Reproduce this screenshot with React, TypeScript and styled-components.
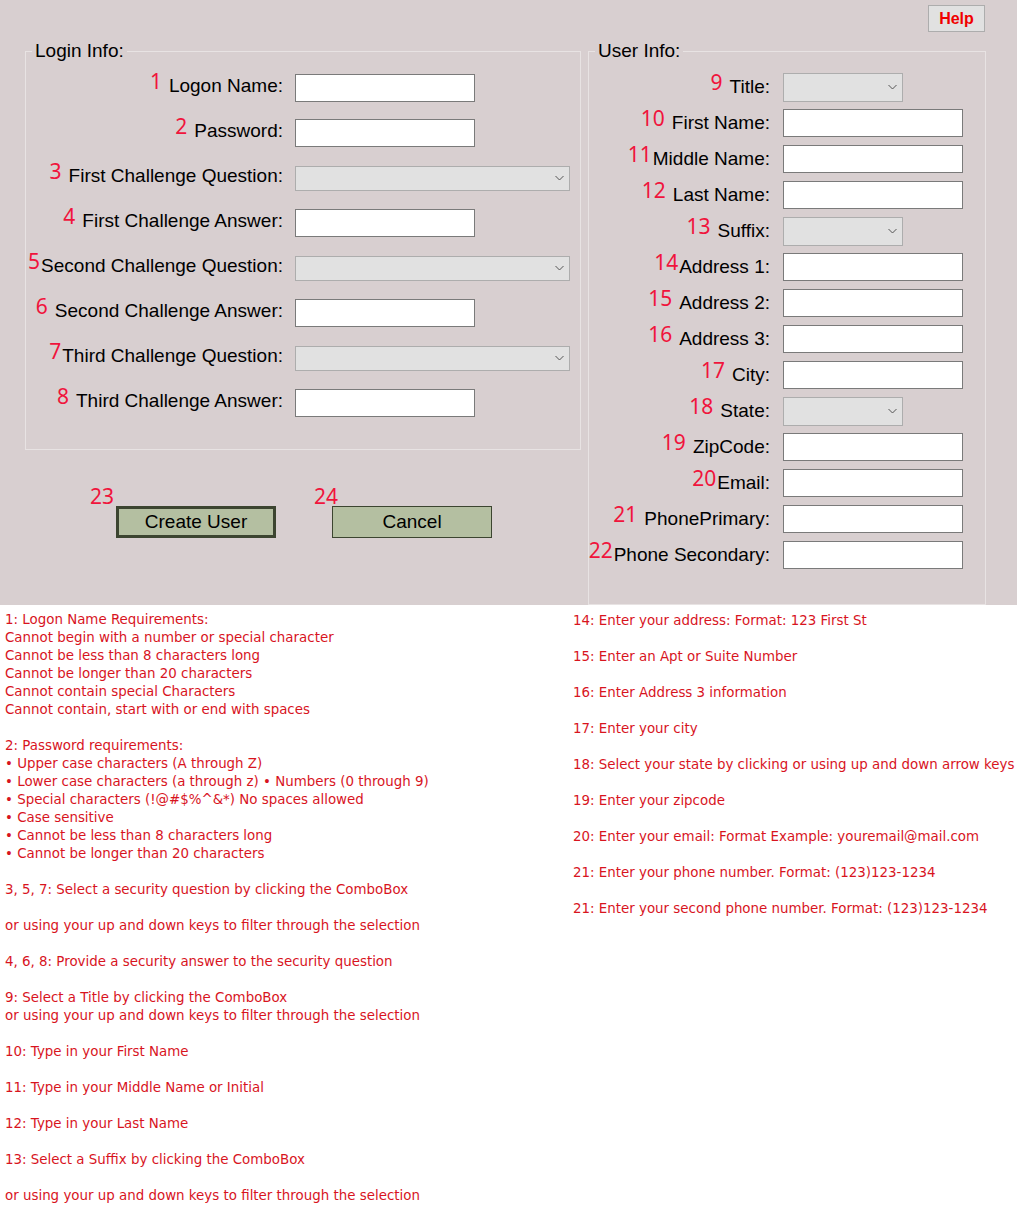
import React from 'react'
import styled, { createGlobalStyle } from 'styled-components'

const GlobalStyle = createGlobalStyle`
  body {
    margin: 0;
    background: #ffffff;
  }
  * {
    box-sizing: border-box;
  }
`

const Page = styled.div`
  width: 1017px;
  font-family: 'Liberation Sans', Arial, sans-serif;
`

const FormPanel = styled.div`
  height: 605px;
  background: #d8cfd0;
  display: flex;
  flex-direction: column;
`

const HelpRow = styled.div`
  height: 40px;
  display: flex;
  justify-content: flex-end;
  padding: 5px 32px 0 0;
`

const HelpButton = styled.button`
  width: 57px;
  height: 27px;
  background: #e1e1e1;
  border: 1px solid #adadad;
  color: #f00000;
  font-family: 'Liberation Sans', Arial, sans-serif;
  font-weight: bold;
  font-size: 16px;
  padding: 0;
`

const Columns = styled.div`
  display: flex;
  gap: 7px;
  padding-left: 25px;
`

const LeftColumn = styled.div`
  display: flex;
  flex-direction: column;
  width: 556px;
`

const GroupBox = styled.fieldset<{ $width: number; $height: number; $padTop: number }>`
  margin: 0;
  width: ${p => p.$width}px;
  height: ${p => p.$height}px;
  border: 1px solid #e8e3e3;
  padding: ${p => p.$padTop}px 0 0 0;
  min-width: 0;
`

const Legend = styled.legend`
  font-size: 19px;
  line-height: 22px;
  color: #000;
  padding: 0 3px;
  margin-left: 6px;
`

const FieldGrid = styled.div<{ $labelWidth: number; $gap: number; $rowGap: number }>`
  display: grid;
  grid-template-columns: ${p => p.$labelWidth}px 1fr;
  grid-auto-rows: 28px;
  column-gap: ${p => p.$gap}px;
  row-gap: ${p => p.$rowGap}px;
  align-items: center;
`

const Label = styled.div<{ $lift: number }>`
  display: flex;
  justify-content: flex-end;
  align-items: baseline;
  white-space: nowrap;
  font-size: 19px;
  color: #000;
  padding-bottom: ${p => p.$lift}px;
`

const Num = styled.span<{ $tight?: boolean }>`
  font-family: 'Noto Sans', 'DejaVu Sans', sans-serif;
  font-size: 21px;
  color: #f0143c;
  position: relative;
  top: -3px;
  margin-right: ${p => (p.$tight ? 1 : 7)}px;
`

const TextBox = styled.input`
  width: 180px;
  height: 28px;
  border: 1px solid #7a7a7a;
  background: #fff;
  padding: 0 4px;
  margin: 0;
`

const Combo = styled.div<{ $width: number; $height: number }>`
  width: ${p => p.$width}px;
  height: ${p => p.$height}px;
  background: #e1e1e1;
  border: 1px solid #adadad;
  display: flex;
  align-items: center;
  justify-content: flex-end;
  padding-right: 5px;
`

const ButtonRow = styled.div`
  display: flex;
  padding: 36px 0 0 65px;
`

const ButtonGroup = styled.div`
  display: flex;
  align-items: flex-start;
  margin-right: 38px;
`

const ButtonNum = styled.span<{ $overlap?: number }>`
  font-family: 'Noto Sans', 'DejaVu Sans', sans-serif;
  font-size: 21px;
  line-height: 21px;
  color: #f0143c;
  margin-right: ${p => 2 - (p.$overlap || 0)}px;
`

const ActionButton = styled.button<{ $thick?: boolean }>`
  margin-top: 20px;
  width: 160px;
  height: 32px;
  background: #b4bfa1;
  border: ${p => (p.$thick ? 3 : 1)}px solid #3c4530;
  font-family: 'Liberation Sans', Arial, sans-serif;
  font-size: 19px;
  color: #000;
  padding: 0;
`

const Notes = styled.div`
  display: grid;
  grid-template-columns: 568px 1fr;
  padding: 6px 0 0 5px;
  background: #fff;
`

const NoteBlock = styled.div<{ $offset?: number }>`
  font-family: 'DejaVu Sans', Verdana, sans-serif;
  font-size: 13.4px;
  line-height: 18px;
  color: #d8141e;
  white-space: pre-line;
  padding-top: ${p => p.$offset || 0}px;
`

const Chevron = () => (
  <svg width="9" height="6" viewBox="0 0 9 6">
    <polyline points="0.5,1 4.5,5 8.5,1" fill="none" stroke="#555" strokeWidth="1" />
  </svg>
)

type Row = { n: string; text: string; tight?: boolean; combo?: number }

const loginRows: Row[] = [
  { n: '1', text: 'Logon Name:' },
  { n: '2', text: 'Password:' },
  { n: '3', text: 'First Challenge Question:', combo: 275 },
  { n: '4', text: 'First Challenge Answer:' },
  { n: '5', text: 'Second Challenge Question:', tight: true, combo: 275 },
  { n: '6', text: 'Second Challenge Answer:' },
  { n: '7', text: 'Third Challenge Question:', tight: true, combo: 275 },
  { n: '8', text: 'Third Challenge Answer:' }
]

const userRows: Row[] = [
  { n: '9', text: 'Title:', combo: 120 },
  { n: '10', text: 'First Name:' },
  { n: '11', text: 'Middle Name:', tight: true },
  { n: '12', text: 'Last Name:' },
  { n: '13', text: 'Suffix:', combo: 120 },
  { n: '14', text: 'Address 1:', tight: true },
  { n: '15', text: 'Address 2:' },
  { n: '16', text: 'Address 3:' },
  { n: '17', text: 'City:' },
  { n: '18', text: 'State:', combo: 120 },
  { n: '19', text: 'ZipCode:' },
  { n: '20', text: 'Email:', tight: true },
  { n: '21', text: 'PhonePrimary:' },
  { n: '22', text: 'Phone Secondary:', tight: true }
]

const leftNotes = `1: Logon Name Requirements:
Cannot begin with a number or special character
Cannot be less than 8 characters long
Cannot be longer than 20 characters
Cannot contain special Characters
Cannot contain, start with or end with spaces
\u00a0
2: Password requirements:
• Upper case characters (A through Z)
• Lower case characters (a through z) • Numbers (0 through 9)
• Special characters (!@#$%^&*) No spaces allowed
• Case sensitive
• Cannot be less than 8 characters long
• Cannot be longer than 20 characters
\u00a0
3, 5, 7: Select a security question by clicking the ComboBox
\u00a0
or using your up and down keys to filter through the selection
\u00a0
4, 6, 8: Provide a security answer to the security question
\u00a0
9: Select a Title by clicking the ComboBox
or using your up and down keys to filter through the selection
\u00a0
10: Type in your First Name
\u00a0
11: Type in your Middle Name or Initial
\u00a0
12: Type in your Last Name
\u00a0
13: Select a Suffix by clicking the ComboBox
\u00a0
or using your up and down keys to filter through the selection`

const rightNotes = [
  '14: Enter your address: Format: 123 First St',
  '15: Enter an Apt or Suite Number',
  '16: Enter Address 3 information',
  '17: Enter your city',
  '18: Select your state by clicking or using up and down arrow keys',
  '19: Enter your zipcode',
  '20: Enter your email: Format Example: youremail@mail.com',
  '21: Enter your phone number. Format: (123)123-1234',
  '21: Enter your second phone number. Format: (123)123-1234'
].join('\n\u00a0\n')

const Fields = ({ rows, comboHeight, lift }: { rows: Row[]; comboHeight: number; lift: number }) => (
  <>
    {rows.map(r => (
      <React.Fragment key={r.n}>
        <Label $lift={lift}>
          <Num $tight={r.tight}>{r.n}</Num>
          {r.text}
        </Label>
        {r.combo ? (
          <Combo $width={r.combo} $height={comboHeight}>
            <Chevron />
          </Combo>
        ) : (
          <TextBox type={r.text === 'Password:' ? 'password' : 'text'} />
        )}
      </React.Fragment>
    ))}
  </>
)

export default function App() {
  return (
    <Page>
      <GlobalStyle />
      <FormPanel>
        <HelpRow>
          <HelpButton>Help</HelpButton>
        </HelpRow>
        <Columns>
          <LeftColumn>
            <GroupBox $width={556} $height={410} $padTop={12}>
              <Legend>Login Info:</Legend>
              <FieldGrid $labelWidth={257} $gap={12} $rowGap={17}>
                <Fields rows={loginRows} comboHeight={25} lift={8} />
              </FieldGrid>
            </GroupBox>
            <ButtonRow>
              <ButtonGroup>
                <ButtonNum>23</ButtonNum>
                <ActionButton $thick>Create User</ActionButton>
              </ButtonGroup>
              <ButtonGroup>
                <ButtonNum $overlap={8}>24</ButtonNum>
                <ActionButton>Cancel</ActionButton>
              </ButtonGroup>
            </ButtonRow>
          </LeftColumn>
          <GroupBox $width={398} $height={565} $padTop={11}>
            <Legend>User Info:</Legend>
            <FieldGrid $labelWidth={181} $gap={13} $rowGap={8}>
              <Fields rows={userRows} comboHeight={29} lift={4} />
            </FieldGrid>
          </GroupBox>
        </Columns>
      </FormPanel>
      <Notes>
        <NoteBlock>{leftNotes}</NoteBlock>
        <NoteBlock $offset={1}>{rightNotes}</NoteBlock>
      </Notes>
    </Page>
  )
}
